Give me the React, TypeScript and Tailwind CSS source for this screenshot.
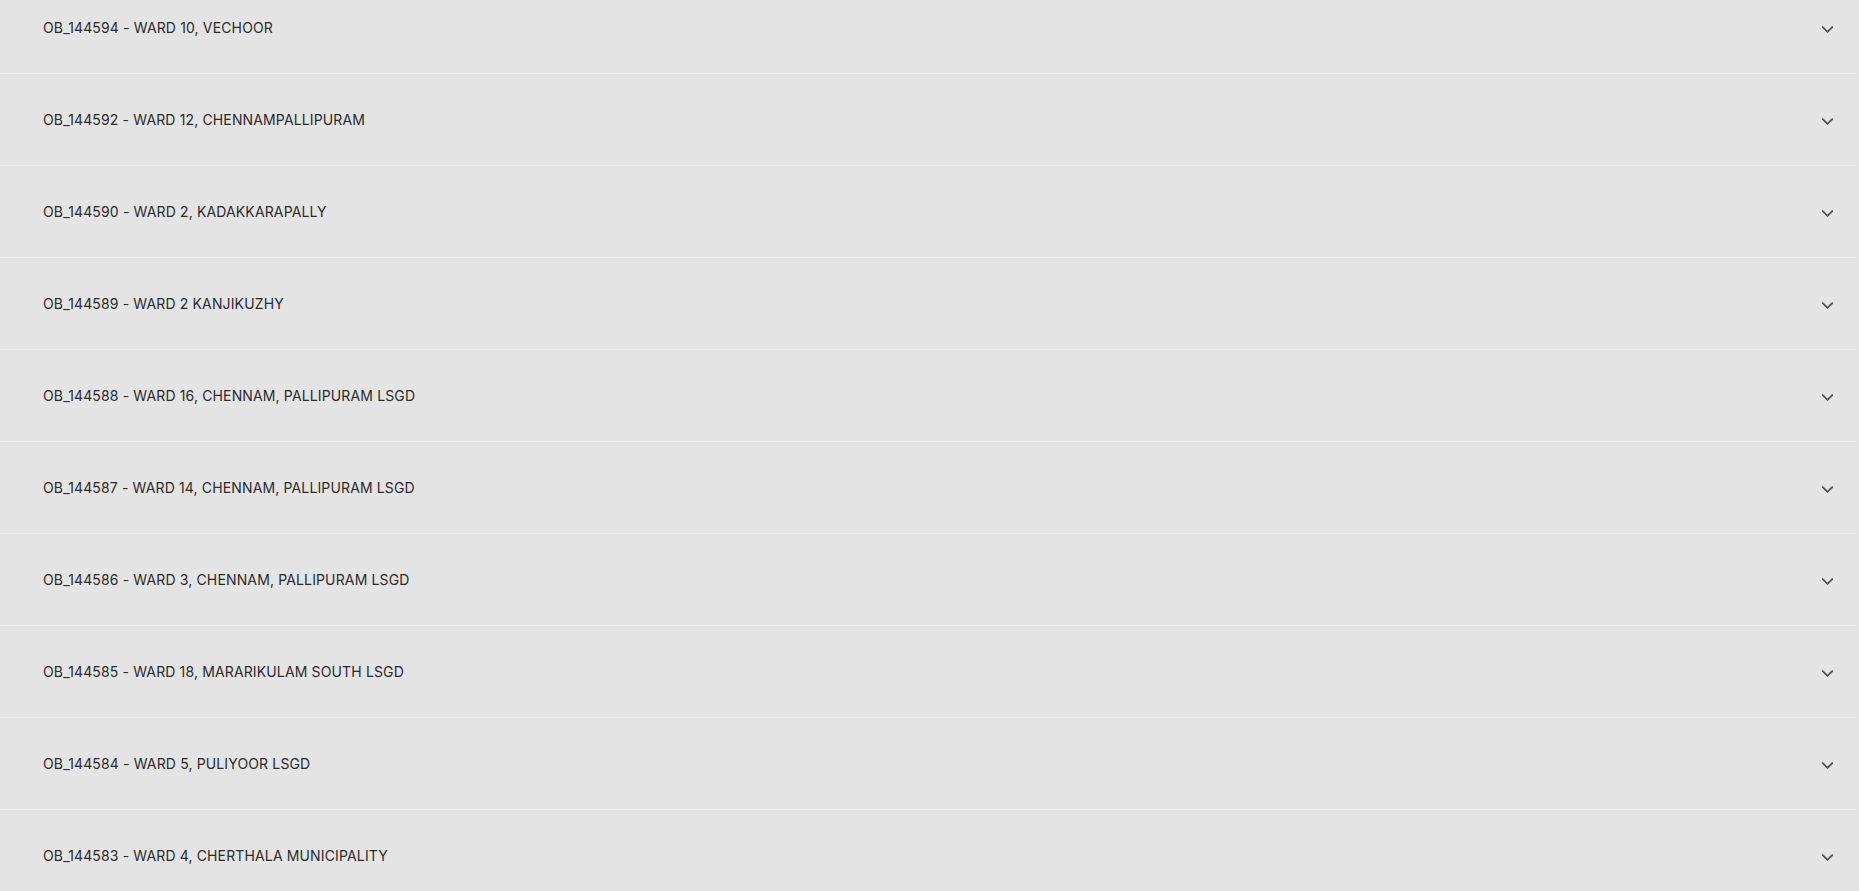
import { ChevronDown } from "lucide-react";

const wards = [
  "OB_144594 - WARD 10, VECHOOR",
  "OB_144592 - WARD 12, CHENNAMPALLIPURAM",
  "OB_144590 - WARD 2, KADAKKARAPALLY",
  "OB_144589 - WARD 2 KANJIKUZHY",
  "OB_144588 - WARD 16, CHENNAM, PALLIPURAM LSGD",
  "OB_144587 - WARD 14, CHENNAM, PALLIPURAM LSGD",
  "OB_144586 - WARD 3, CHENNAM, PALLIPURAM LSGD",
  "OB_144585 - WARD 18, MARARIKULAM SOUTH LSGD",
  "OB_144584 - WARD 5, PULIYOOR LSGD",
  "OB_144583 - WARD 4, CHERTHALA MUNICIPALITY",
];

export default function App() {
  return (
    <main
      className="h-[891px] w-full overflow-hidden bg-[#e4e4e4] text-[#2b2b2b]"
      style={{ fontFamily: "Inter, 'Noto Sans', sans-serif" }}
    >
      {/* list is scrolled a little, first row is cut at the top */}
      <div className="-mt-[18px] flex flex-col pr-[3px]">
        {wards.map((w) => (
          <button
            key={w}
            type="button"
            className="flex h-[92px] w-full items-center justify-between border-b border-[#ececec] bg-[#e4e4e4] pl-[43px] pr-[19px] text-left shadow-[0_1px_1px_rgba(0,0,0,0.04)]"
          >
            <span className="text-[14px] leading-none tracking-[0.01em]">{w}</span>
            <ChevronDown className="mt-[4px] h-[19px] w-[19px] text-[#555]" strokeWidth={2.4} />
          </button>
        ))}
      </div>
    </main>
  );
}
